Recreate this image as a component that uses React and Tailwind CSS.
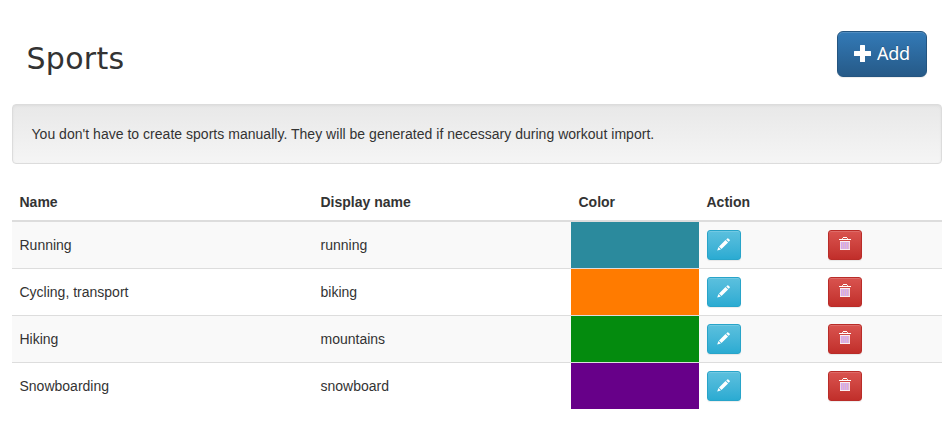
const sports = [
  { name: "Running", display: "running", color: "bg-[#2b8a9d]" },
  { name: "Cycling, transport", display: "biking", color: "bg-[#ff7b00]" },
  { name: "Hiking", display: "mountains", color: "bg-[#048b0e]" },
  { name: "Snowboarding", display: "snowboard", color: "bg-[#670089]" },
];

const grid = "grid grid-cols-[301px_258px_128px_121px_122px]";

function Pencil() {
  return (
    <svg width="13" height="13" viewBox="0 0 13 13" fill="#fff" className="mr-[1px] block">
      <path d="M9.2 1.4 10.3.4q.5-.4 1 0l1.4 1.4q.4.5 0 1l-1.1 1zM8.5 1.9l2.6 2.6-6.6 6.4-2.5-2.5zM1.5 9l2.4 2.4L.2 12.6z" />
    </svg>
  );
}

function Trash() {
  return (
    <svg width="12" height="13" viewBox="0 0 12 13" className="block" shapeRendering="crispEdges">
      <path d="M4 0h4v1H4z" fill="#fff" />
      <path d="M3 1h1v1H3zM8 1h1v1H8z" fill="#f6dcc8" />
      <path d="M0 2h12v1H0z" fill="#fff" />
      <path d="M1 4h10v1H1zM1 12h10v1H1z" fill="#fbeef0" />
      <path d="M1 5h1v7H1zM10 5h1v7h-1z" fill="#f3d6e6" />
      <path d="M2 5h8v7H2z" fill="#d2a8f0" />
      <path d="M3 5h1v7H3zM5 5h1v7H5zM7 5h1v7H7zM9 5h1v7H9z" fill="#e2b8cc" />
    </svg>
  );
}

function Row({ sport, index }) {
  return (
    <div
      className={`${grid} ${index > 0 ? "h-[47px] border-t border-[#ddd]" : "h-[46px]"} ${
        index % 2 === 0 ? "bg-[#f9f9f9]" : "bg-white"
      }`}
    >
      <div className="flex items-center pl-[7.5px]">{sport.name}</div>
      <div className="flex items-center pl-[7.5px]">{sport.display}</div>
      <div className={sport.color} />
      <div className="pt-2 pl-2">
        <button className="flex h-[30px] w-[34px] items-start justify-center rounded-[3px] border border-[#28a4c9] bg-linear-to-b from-[#5bc0de] to-[#2aabd2] pt-[7px] shadow-[inset_0_1px_0_rgba(255,255,255,0.15),0_1px_1px_rgba(0,0,0,0.075)]">
          <Pencil />
        </button>
      </div>
      <div className="pt-2 pl-2">
        <button className="flex h-[30px] w-[34px] items-start justify-center rounded-[3px] border border-[#b92c28] bg-linear-to-b from-[#d9534f] to-[#c12e2a] pt-[6px] shadow-[inset_0_1px_0_rgba(255,255,255,0.15),0_1px_1px_rgba(0,0,0,0.075)]">
          <Trash />
        </button>
      </div>
    </div>
  );
}

export default function App() {
  return (
    <div className="h-[438px] w-[952px] overflow-hidden bg-white pr-[10px] pl-3 font-['Liberation_Sans',Arial,sans-serif] text-[14px] leading-5 text-[#333]">
      <header className="flex h-[104px] items-start justify-between pt-[31px] pr-[15px] pl-[14.5px]">
        <h1 className="pt-[11px] font-['DejaVu_Sans',sans-serif] text-[30px] leading-[33px] tracking-[0.3px]">Sports</h1>
        <button className="flex h-[46px] w-[90px] items-center rounded-[6px] border border-[#245580] bg-linear-to-b from-[#337ab7] to-[#265a88] pb-[2px] pl-[16px] font-['Noto_Sans',sans-serif] text-[18px] leading-6 tracking-[-0.3px] text-white shadow-[inset_0_1px_0_rgba(255,255,255,0.15),0_1px_1px_rgba(0,0,0,0.075)] [text-shadow:0_-1px_0_rgba(0,0,0,0.2)]">
          <svg width="17" height="17" viewBox="0 0 17 17" fill="#fff" className="mr-[6px] block">
            <path d="M6.5 0h4q.5 0 .5.5V6h5.5q.5 0 .5.5v4q0 .5-.5.5H11v5.5q0 .5-.5.5h-4q-.5 0-.5-.5V11H.5q-.5 0-.5-.5v-4Q0 6 .5 6H6V.5q0-.5.5-.5z" />
          </svg>
          Add
        </button>
      </header>
      <div className="flex h-[60px] items-center rounded-[4px] border border-[#dcdcdc] bg-linear-to-b from-[#e8e8e8] to-[#f5f5f5] pl-[18.5px] tracking-[0.024px] shadow-[inset_0_1px_3px_rgba(0,0,0,0.05),0_1px_0_rgba(255,255,255,0.1)]">
        You don't have to create sports manually. They will be generated if necessary during workout import.
      </div>
      <div className="mt-5">
        <div className={`${grid} h-[38px] border-b-2 border-[#ddd] pt-2 font-bold`}>
          <div className="pl-[7.5px]">Name</div>
          <div className="pl-[7.5px]">Display name</div>
          <div className="pl-[7.5px]">Color</div>
          <div className="pl-[7.5px]">Action</div>
        </div>
        {sports.map((sport, index) => (
          <Row key={sport.name} sport={sport} index={index} />
        ))}
      </div>
    </div>
  );
}
